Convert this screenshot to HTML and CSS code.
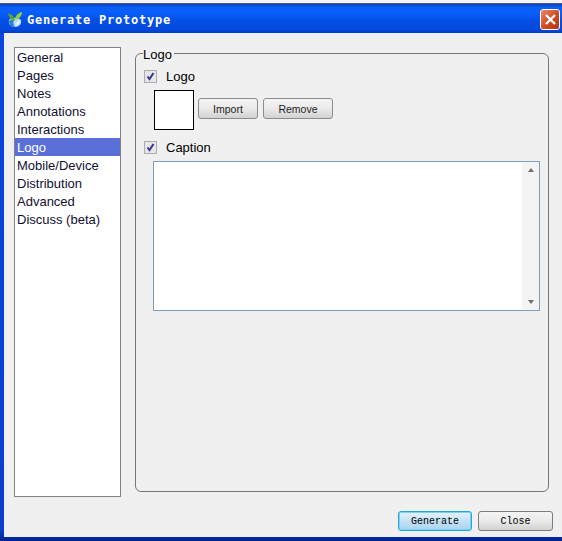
FILE: index.html
```html
<!DOCTYPE html>
<html>
<head>
    <meta charset="utf-8">
    <link rel="stylesheet" href="styles.css">
</head>
<body>
    <div class="window">
        <div class="titlebar">
            <svg class="app-icon" width="16" height="16" viewBox="0 0 16 16">
                <path d="M2 8 C4 5 11 5 14 8 C15 12 12 15 8 15 C4 15 1 12 2 8 Z" fill="#b8def8"/>
                <path d="M2 9 C2 12 4 15 8 15 C6 12 6 10 7 8 C5 7 3 8 2 9 Z" fill="#2c7fd4"/>
                <path d="M9 13 C11 13 13 11 13 9 C11 9 9 11 9 13 Z" fill="#eef8ff"/>
                <path d="M8 9 C5 8 2 6 1 2 C4 1 7 4 8 9 Z" fill="#5aa428"/>
                <path d="M8 8 C8 5 10 1 15 0 C15 4 12 7 8 8 Z" fill="#8fd03c"/>
            </svg>
            <div class="title">Generate Prototype</div>
            <div class="close-x">
                <svg width="13" height="13" viewBox="0 0 13 13">
                    <path d="M2 2 L11 11 M11 2 L2 11" stroke="#fff" stroke-width="2.4"/>
                </svg>
            </div>
        </div>

        <div class="client">
            <div class="main">
                <ul class="nav-list">
                    <li>General</li>
                    <li>Pages</li>
                    <li>Notes</li>
                    <li>Annotations</li>
                    <li>Interactions</li>
                    <li class="selected">Logo</li>
                    <li>Mobile/Device</li>
                    <li>Distribution</li>
                    <li>Advanced</li>
                    <li>Discuss (beta)</li>
                </ul>

                <fieldset class="group">
                    <legend>Logo</legend>
                    <div class="check-row">
                        <span class="checkbox"><svg width="9" height="9" viewBox="0 0 9 9"><path d="M1.5 4.5 L3.5 7 L7.5 1" fill="none" stroke="#34349a" stroke-width="2"/></svg></span>
                        <span>Logo</span>
                    </div>
                    <div class="logo-row">
                        <div class="logo-box"></div>
                        <button class="btn btn-import">Import</button>
                        <button class="btn btn-remove">Remove</button>
                    </div>
                    <div class="check-row">
                        <span class="checkbox"><svg width="9" height="9" viewBox="0 0 9 9"><path d="M1.5 4.5 L3.5 7 L7.5 1" fill="none" stroke="#34349a" stroke-width="2"/></svg></span>
                        <span>Caption</span>
                    </div>
                    <div class="caption-box">
                        <div class="scrollbar">
                            <span class="arrow-up"></span>
                            <span class="arrow-down"></span>
                        </div>
                    </div>
                </fieldset>
            </div>

            <div class="footer">
                <button class="btn footer-btn btn-generate">Generate</button>
                <button class="btn footer-btn btn-close">Close</button>
            </div>
        </div>
    </div>
</body>
</html>
```

FILE: styles.css
```css
html, body {
    margin: 0;
    padding: 0;
    height: 541px;
    overflow: hidden;
    background: #f4f4f4;
}

body {
    font-family: "Liberation Sans", Arial, sans-serif;
    font-size: 13px;
    color: #000;
}

.window {
    height: 538px;
    margin-top: 3px;
    display: flex;
    flex-direction: column;
    background: linear-gradient(to bottom, #0a46e0, #0a3fd0 98%, #02208c);
}

.titlebar {
    height: 30px;
    flex-shrink: 0;
    display: flex;
    align-items: center;
    padding: 2px 2px 0 7px;
    background: linear-gradient(to bottom, #0a3cc0 0, #0a5cf0 3px, #0860ff 8px, #0450e4 16px, #0448dc 26px, #0436b8 30px);
    border-top: 1px solid #4a5a7a;
    box-sizing: border-box;
}

.app-icon {
    flex-shrink: 0;
}

.title {
    flex: 1;
    margin-left: 4px;
    font-family: "DejaVu Sans Mono", monospace;
    font-size: 12px;
    font-weight: bold;
    letter-spacing: 0.78px;
    color: #fff;
}

.close-x {
    width: 20px;
    height: 21px;
    box-sizing: border-box;
    display: flex;
    align-items: center;
    justify-content: center;
    background: linear-gradient(135deg, #e88a70, #d04a20 55%, #b83410);
    border: 1px solid #fff;
    border-radius: 3px;
}

.client {
    flex: 1;
    margin: 0 0 4px 4px;
    background: #f0f0f0;
    display: flex;
    flex-direction: column;
    min-height: 0;
}

.main {
    display: flex;
    gap: 14px;
    padding: 14px 13px 0 10px;
}

.nav-list {
    list-style: none;
    margin: 0;
    padding: 0;
    width: 105px;
    height: 448px;
    flex-shrink: 0;
    background: #fff;
    border: 1px solid #828282;
}

.nav-list li {
    height: 18px;
    line-height: 20px;
    padding-left: 2px;
    color: #101030;
}

.nav-list .selected {
    background: #5a70d8;
    color: #fff;
}

.group {
    flex: 1;
    min-width: 0;
    margin: -3px 0 0 0;
    height: 448px;
    box-sizing: border-box;
    padding: 7px 8px 0 8px;
    border: 1px solid #777;
    border-radius: 6px;
}

.group legend {
    padding: 4px 2px 0 0;
    margin-left: -1px;
    line-height: 14px;
}

.check-row {
    display: flex;
    align-items: center;
    gap: 9px;
    height: 14px;
}

.checkbox {
    width: 13px;
    height: 13px;
    box-sizing: border-box;
    display: flex;
    align-items: center;
    justify-content: center;
    border: 1px solid #acacb4;
    background: #e6e6e6;
}

.logo-row {
    display: flex;
    align-items: center;
    margin: 7px 0 10px 10px;
}

.logo-box {
    width: 40px;
    height: 40px;
    box-sizing: border-box;
    background: #fff;
    border: 1px solid #000;
    margin-right: 4px;
}

.btn {
    padding: 0;
    height: 21px;
    font-family: "Liberation Sans", Arial, sans-serif;
    font-size: 10.5px;
    color: #222;
    border: 1px solid #8c8c8c;
    border-radius: 3px;
    background: linear-gradient(to bottom, #f4f4f4, #eaeaea 50%, #d2d2d2);
}

.btn-import {
    width: 60px;
    margin: 0 5px 3px 0;
}

.btn-remove {
    width: 70px;
    margin-bottom: 3px;
}

.caption-box {
    margin: 7px 0 0 9px;
    height: 150px;
    box-sizing: border-box;
    background: #fff;
    border: 1px solid #7f9db9;
    display: flex;
    justify-content: flex-end;
}

.scrollbar {
    width: 17px;
    background: #f4f4f4;
    display: flex;
    flex-direction: column;
    justify-content: space-between;
    align-items: center;
    padding: 6px 0;
}

.arrow-up {
    border-left: 3px solid transparent;
    border-right: 3px solid transparent;
    border-bottom: 4px solid #707070;
}

.arrow-down {
    border-left: 3px solid transparent;
    border-right: 3px solid transparent;
    border-top: 4px solid #707070;
}

.footer {
    display: flex;
    justify-content: flex-end;
    gap: 6px;
    padding: 14px 9px 0 0;
}

.footer-btn {
    width: 75px;
    height: 20px;
    font-family: "Liberation Mono", monospace;
    font-size: 10px;
    color: #000;
}

.btn-close {
    border-color: #7c7c7c;
}

.btn-generate {
    width: 74px;
    border-color: #1ea8dc;
    box-shadow: inset 0 0 0 1px #7fd0f0;
    background: linear-gradient(to bottom, #e6f4fc, #c4e2f6 50%, #a8d4f0);
}
```
